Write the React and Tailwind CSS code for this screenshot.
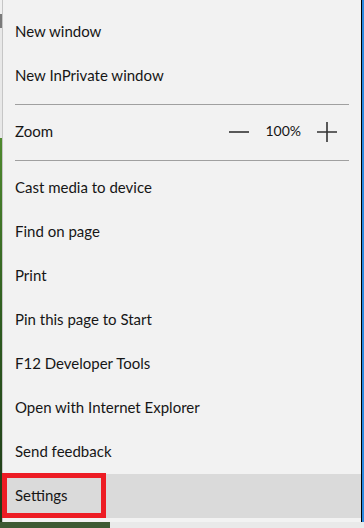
import React from "react";

const items = [
    "Cast media to device",
    "Find on page",
    "Print",
    "Pin this page to Start",
    "F12 Developer Tools",
    "Open with Internet Explorer",
    "Send feedback",
];

function MenuRow({ label, active }) {
    return (
        <div className={"h-[44px] flex items-center px-3 " + (active ? "bg-[#dadada]" : "")}>
            <span className="text-[15px] leading-none text-[#161616] -mt-[2px]">{label}</span>
        </div>
    );
}

function Separator() {
    return (
        <div className="h-[12px] flex items-center px-3">
            <div className="h-px w-full bg-[#a0a0a0]" />
        </div>
    );
}

export default function App() {
    return (
        <div
            className="w-[364px] h-[528px] relative overflow-hidden flex flex-col bg-[#2f4a25]"
            style={{ fontFamily: 'Lato, "Noto Sans", "Liberation Sans", sans-serif' }}
        >
            <div className="flex flex-1">
                {/* page behind the menu */}
                <div className="w-[2px] flex flex-col">
                    <div className="h-[14px] bg-[#f0f0f0]" />
                    <div className="h-[14px] bg-[#7a7a7a]" />
                    <div className="h-[110px] bg-[#e8e8e8]" />
                    <div className="flex-1 bg-gradient-to-b from-[#4f8a2e] via-[#2d5a1f] to-[#1f3a18]" />
                </div>

                <div className="flex-1 bg-[#f2f2f2] border-l border-[#c6c6c6] border-r border-r-black flex flex-col pt-[10px] pb-[4px]">
                    <MenuRow label="New window" />
                    <MenuRow label="New InPrivate window" />
                    <Separator />
                    <div className="h-[44px] flex items-center pl-3 pr-[24px]">
                        <span className="text-[15px] leading-none text-[#161616] flex-1 -mt-[2px]">Zoom</span>
                        <svg width="20" height="20" viewBox="0 0 20 20" className="text-[#333]">
                            <path d="M0 10h20" stroke="currentColor" strokeWidth="1.6" />
                        </svg>
                        <span className="text-[14px] leading-none text-[#161616] mx-4 -mt-[2px]">100%</span>
                        <svg width="20" height="20" viewBox="0 0 20 20" className="text-[#333]">
                            <path d="M0 10h20M10 0v20" stroke="currentColor" strokeWidth="1.6" />
                        </svg>
                    </div>
                    <Separator />
                    {items.map((it) => (
                        <MenuRow key={it} label={it} />
                    ))}
                    <MenuRow label="Settings" active />
                </div>

                <div className="w-[2px] bg-[#2b8ae0]" />
            </div>

            {/* strip of page under the menu */}
            <div className="h-[6px] flex">
                <div className="w-[110px] bg-[#3d5a33]" />
                <div className="flex-1 bg-[#e9e9e9]" />
            </div>

            {/* red annotation box */}
            <div className="absolute left-[2px] top-[473px] w-[104px] h-[45px] border-[5px] border-[#ed1c24]" />
        </div>
    );
}
